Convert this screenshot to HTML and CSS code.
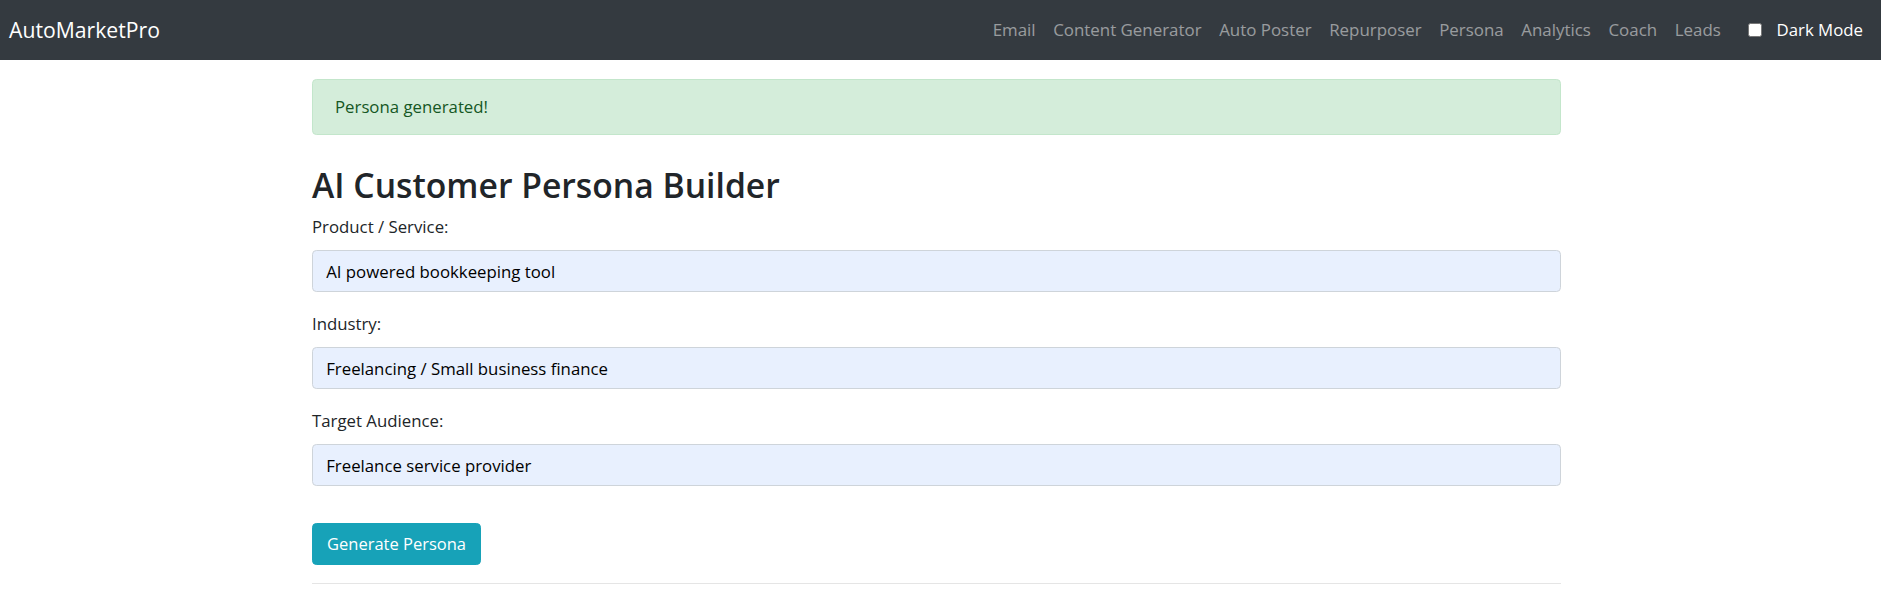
FILE: index.html
```html
<!DOCTYPE html>
<html lang="en">
<head>
<meta charset="utf-8">
<title>AutoMarketPro – Persona</title>
<link rel="stylesheet" href="styles.css">
</head>
<body>
<nav class="navbar">
  <a class="brand" href="#">AutoMarketPro</a>
  <div class="nav-right">
    <ul class="nav-links">
      <li><a href="#">Email</a></li>
      <li><a href="#">Content Generator</a></li>
      <li><a href="#">Auto Poster</a></li>
      <li><a href="#">Repurposer</a></li>
      <li><a href="#">Persona</a></li>
      <li><a href="#">Analytics</a></li>
      <li><a href="#">Coach</a></li>
      <li><a href="#">Leads</a></li>
    </ul>
    <label class="dark-toggle">
      <input type="checkbox" class="dark-check">
      <span class="dark-label">Dark Mode</span>
    </label>
  </div>
</nav>

<main class="container">
  <div class="alert">Persona generated!</div>
  <h2 class="title">AI Customer Persona Builder</h2>
  <form class="persona-form">
    <div class="form-group">
      <label class="form-label" for="product">Product / Service:</label>
      <input class="form-control" id="product" type="text" value="AI powered bookkeeping tool">
    </div>
    <div class="form-group">
      <label class="form-label" for="industry">Industry:</label>
      <input class="form-control" id="industry" type="text" value="Freelancing / Small business finance">
    </div>
    <div class="form-group">
      <label class="form-label" for="audience">Target Audience:</label>
      <input class="form-control" id="audience" type="text" value="Freelance service provider">
    </div>
    <div class="form-actions">
      <button class="btn-info" type="button">Generate Persona</button>
    </div>
  </form>
  <hr class="divider">
</main>
</body>
</html>
```
FILE: styles.css
```css
* { box-sizing: border-box; }

html, body {
  margin: 0;
  padding: 0;
  background: #fff;
}

body {
  font-family: "Open Sans", "Noto Sans", sans-serif;
  font-size: 16.8px;
  line-height: 26.4px;
  color: #212529;
}

/* ---------- navbar ---------- */
.navbar {
  height: 60px;
  background: #343a40;
  display: flex;
  align-items: center;
  justify-content: space-between;
  padding: 0 18px 0 9px;
}

.brand {
  font-size: 21.2px;
  line-height: 31.8px;
  color: #fff;
  text-decoration: none;
}

.nav-right {
  display: flex;
  align-items: center;
}

.nav-links {
  list-style: none;
  margin: 0;
  padding: 0;
  display: flex;
}

.nav-links a {
  display: block;
  padding: 0 8.8px;
  color: rgba(255, 255, 255, 0.5);
  text-decoration: none;
  font-size: 16.9px;
  line-height: 26.4px;
}

.dark-toggle {
  display: flex;
  align-items: center;
  margin-left: 18px;
  color: #fff;
}

.dark-check {
  appearance: none;
  -webkit-appearance: none;
  width: 14px;
  height: 14px;
  margin: 0;
  background: #fff;
  border: 1px solid #767676;
  border-radius: 2.5px;
}

.dark-label {
  margin-left: 15px;
  font-size: 16.8px;
  line-height: 26.4px;
}

/* ---------- content ---------- */
.container {
  width: 1249px;
  margin-left: 312px;
}

.alert {
  margin-top: 19px;
  margin-bottom: 29.7px;
  padding: 13.8px 22px;
  background: #d4edda;
  border: 1px solid #c3e6cb;
  border-radius: 4.4px;
  color: #155724;
}

.title {
  margin: 0 0 8.8px;
  font-size: 33.7px;
  font-weight: 600;
  line-height: 40.8px;
  color: #212529;
}

.persona-form {
  margin: 0;
}

.form-group {
  margin-bottom: 19.2px;
}

.form-label {
  display: block;
  margin-bottom: 9.4px;
}

.form-control {
  display: block;
  width: 100%;
  height: 42px;
  padding: 0 13.2px;
  font-family: inherit;
  font-size: 16.8px;
  color: #000;
  background: #e8f0fe;
  border: 1px solid #ced4da;
  border-radius: 4.4px;
  outline: none;
}

.form-actions {
  padding-top: 17.8px;
}

.btn-info {
  display: block;
  height: 42px;
  padding: 0 14px;
  font-family: inherit;
  font-size: 16.5px;
  line-height: 26.4px;
  color: #fff;
  background: #17a2b8;
  border: 1px solid #17a2b8;
  border-radius: 4.4px;
  cursor: pointer;
}

.divider {
  margin: 18.4px 0 0;
  border: 0;
  border-top: 1px solid rgba(0, 0, 0, 0.1);
}
```
